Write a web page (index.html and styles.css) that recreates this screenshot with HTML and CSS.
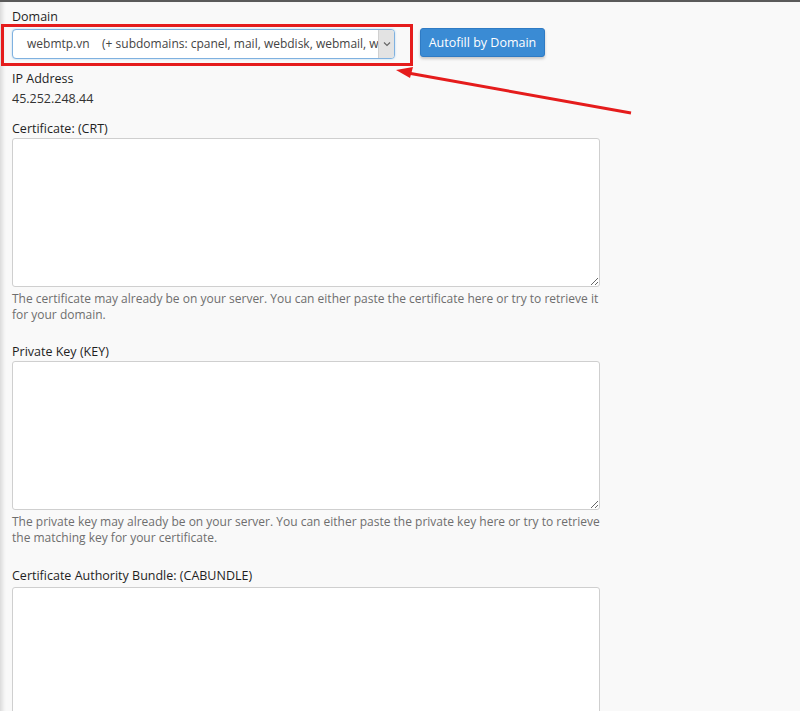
FILE: index.html
```html
<!DOCTYPE html>
<html lang="en">
<head>
<meta charset="utf-8">
<title>Install SSL</title>
<link rel="stylesheet" href="styles.css">
</head>
<body>
<div class="page">
  <div class="field">
    <label class="label">Domain</label>
    <div class="domain-row">
      <div class="select">
        <span class="select-text">webmtp.vn&nbsp;&nbsp;&nbsp;&nbsp;(+ subdomains: cpanel, mail, webdisk, webmail, www)</span>
        <span class="select-arrow"><svg width="8" height="6" viewBox="0 0 8 6"><path d="M1 1.5 L4 4.5 L7 1.5" fill="none" stroke="#666" stroke-width="1.2"/></svg></span>
      </div>
      <button class="btn">Autofill by Domain</button>
    </div>
  </div>
  <div class="field ip">
    <div class="label">IP Address</div>
    <div class="value">45.252.248.44</div>
  </div>
  <div class="field">
    <label class="label">Certificate: (CRT)</label>
    <textarea class="area"></textarea>
    <p class="help">The certificate may already be on your server. You can either paste the certificate here or try to retrieve it for your domain.</p>
  </div>
  <div class="field">
    <label class="label">Private Key (KEY)</label>
    <textarea class="area"></textarea>
    <p class="help">The private key may already be on your server. You can either paste the private key here or try to retrieve the matching key for your certificate.</p>
  </div>
  <div class="field last">
    <label class="label">Certificate Authority Bundle: (CABUNDLE)</label>
    <textarea class="area"></textarea>
  </div>
</div>
<div class="highlight-box"></div>
<svg class="arrow" width="800" height="711" viewBox="0 0 800 711">
  <line x1="631" y1="113" x2="408" y2="73" stroke="#e51c1c" stroke-width="3"/>
  <polygon points="396,70 413,67 410,78" fill="#e51c1c"/>
</svg>
</body>
</html>
```
FILE: styles.css
```css
html, body {
  margin: 0;
  padding: 0;
}
body {
  background: #f9f9f9;
  font-family: "Open Sans", "Liberation Sans", sans-serif;
  color: #333;
  border-top: 2px solid #5a5a5a;
  box-shadow: inset 5px 0 4px -3px #d4d4d4;
  min-height: 709px;
  position: relative;
  overflow: hidden;
}
.page {
  padding: 5px 0 0 12px;
  width: 588px;
}
.label {
  display: block;
  font-size: 12.5px;
  line-height: 20px;
  color: #1f1f1f;
}
.domain-row {
  display: flex;
  align-items: flex-start;
  gap: 25px;
  margin-top: 2px;
}
.select {
  box-sizing: border-box;
  width: 383px;
  height: 30px;
  border: 1px solid #7fb1e0;
  border-radius: 4px;
  background: #fff;
  display: flex;
  align-items: stretch;
  overflow: hidden;
  box-shadow: 0 0 2px rgba(102, 175, 233, 0.5);
}
.select-text {
  flex: 1;
  white-space: nowrap;
  overflow: hidden;
  text-overflow: clip;
  font-size: 12px;
  line-height: 28px;
  color: #444;
  padding-left: 14px;
}
.select-arrow {
  width: 15px;
  background: #e3e3e3;
  border-left: 1px solid #d0d0d0;
  display: flex;
  align-items: center;
  justify-content: center;
}
.btn {
  box-sizing: border-box;
  width: 125px;
  height: 29px;
  margin-top: -1px;
  border: 1px solid #2f7bc4;
  border-radius: 3px;
  background: #3a8bd4;
  color: #fff;
  font-family: "Open Sans", "Liberation Sans", sans-serif;
  font-size: 12.5px;
  padding: 0;
  box-shadow: 0 2px 3px rgba(0, 0, 0, 0.2);
}
.value {
  font-size: 12.5px;
  line-height: 20px;
  color: #333;
}
.area {
  display: block;
  box-sizing: border-box;
  width: 588px;
  height: 149px;
  margin: -1px 0 0;
  border: 1px solid #cfcfcf;
  border-radius: 3px;
  background: #fff;
  resize: vertical;
}
.help {
  margin: 4px 0 0;
  font-size: 12px;
  line-height: 16px;
  color: #6e6e6e;
}
.field + .field {
  margin-top: 19px;
}
.field.ip {
  margin-top: 10px;
}
.ip + .field {
  margin-top: 10px;
}
.field.last {
  margin-top: 20px;
}
.field.last .area {
  margin-top: 1px;
}
.highlight-box {
  position: absolute;
  left: 1px;
  top: 22px;
  width: 406px;
  height: 36px;
  border: 3px solid #e51c1c;
}
.arrow {
  position: absolute;
  left: 0;
  top: -2px;
  pointer-events: none;
}
```
